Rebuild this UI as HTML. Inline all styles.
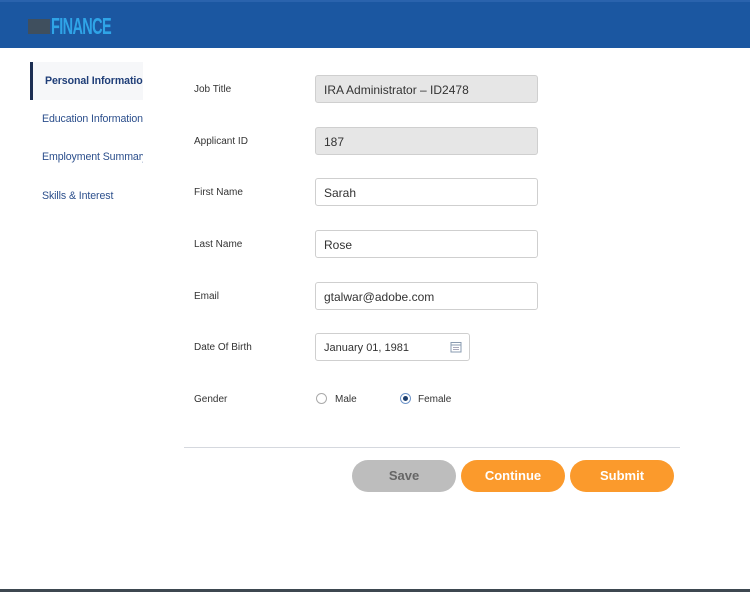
<!DOCTYPE html>
<html><head><meta charset="utf-8"><style>
*{box-sizing:border-box;margin:0;padding:0}
body{width:750px;height:592px;background:#fff;font-family:"Liberation Sans",sans-serif;position:relative;overflow:hidden}
.hdr{position:absolute;left:0;top:0;width:750px;height:48px;background:#1b57a1;border-top:2px solid #2a63ad}
.logo-box{position:absolute;left:28px;top:19px;width:22px;height:15px;background:#3f4f5e}
.logo{position:absolute;left:51px;top:13px;font-size:23px;font-weight:bold;color:#2fa4e7;letter-spacing:-1px;transform:scaleX(0.63);transform-origin:left}
.nav{position:absolute;left:30px;width:113px;font-size:10.6px;letter-spacing:-0.1px;color:#2c4f8c;white-space:nowrap;overflow:hidden}
.nav.act{top:62px;height:38px;background:#f6f7f9;border-left:3px solid #1b2e52;font-weight:bold;color:#1f3e78;padding:13px 0 0 12px}
.lbl{position:absolute;left:194px;font-size:10px;color:#333}
.inp{position:absolute;left:315px;width:223px;height:28px;border:1px solid #cfcfcf;border-radius:3px;font-size:12px;color:#333;padding:7px 0 0 8px}
.ro{background:#e6e6e6}
.btn{position:absolute;top:460px;width:104px;height:32px;border-radius:16px;color:#fff;font-weight:bold;font-size:13px;text-align:center;line-height:32px}
</style></head><body>
<div class="hdr"></div>
<div class="logo-box"></div><div class="logo">FINANCE</div>
<div class="nav act">Personal Information</div>
<div class="nav" style="top:113px;left:42px;width:101px">Education Information</div>
<div class="nav" style="top:151px;left:42px;width:101px">Employment Summary</div>
<div class="nav" style="top:190px;left:42px;width:101px">Skills &amp; Interest</div>

<div class="lbl" style="top:84px">Job Title</div>
<div class="inp ro" style="top:75px">IRA Administrator – ID2478</div>
<div class="lbl" style="top:136px">Applicant ID</div>
<div class="inp ro" style="top:127px">187</div>
<div class="lbl" style="top:187px">First Name</div>
<div class="inp" style="top:178px">Sarah</div>
<div class="lbl" style="top:239px">Last Name</div>
<div class="inp" style="top:230px">Rose</div>
<div class="lbl" style="top:291px">Email</div>
<div class="inp" style="top:282px">gtalwar@adobe.com</div>
<div class="lbl" style="top:342px">Date Of Birth</div>
<div class="inp" style="top:333px;width:155px;font-size:11px;padding-top:8px">January 01, 1981
<svg style="position:absolute;right:7px;top:7px" width="12" height="12" viewBox="0 0 12 12"><rect x="1" y="1.5" width="10" height="9.5" fill="none" stroke="#8a9bb0"/><line x1="1" y1="4" x2="11" y2="4" stroke="#8a9bb0"/><line x1="3" y1="6.5" x2="9" y2="6.5" stroke="#aab"/><line x1="3" y1="8.5" x2="9" y2="8.5" stroke="#aab"/></svg></div>
<div class="lbl" style="top:394px">Gender</div>
<div style="position:absolute;left:316px;top:393px;width:11px;height:11px;border:1px solid #aaa;border-radius:50%"></div>
<div class="lbl" style="left:335px;top:394px">Male</div>
<div style="position:absolute;left:400px;top:393px;width:11px;height:11px;border:1px solid #6f95c9;border-radius:50%;background:#fff"><div style="width:5px;height:5px;background:#1d3f6e;border-radius:50%;margin:2px"></div></div>
<div class="lbl" style="left:418px;top:394px">Female</div>

<div style="position:absolute;left:184px;top:447px;width:496px;height:1px;background:#d5d8de"></div>
<div class="btn" style="left:352px;background:#bdbdbd;color:#666">Save</div>
<div class="btn" style="left:461px;background:#fb9a2c">Continue</div>
<div class="btn" style="left:570px;background:#fb9a2c">Submit</div>
<div style="position:absolute;left:0;top:589px;width:750px;height:3px;background:#3d4750"></div>
</body></html>
